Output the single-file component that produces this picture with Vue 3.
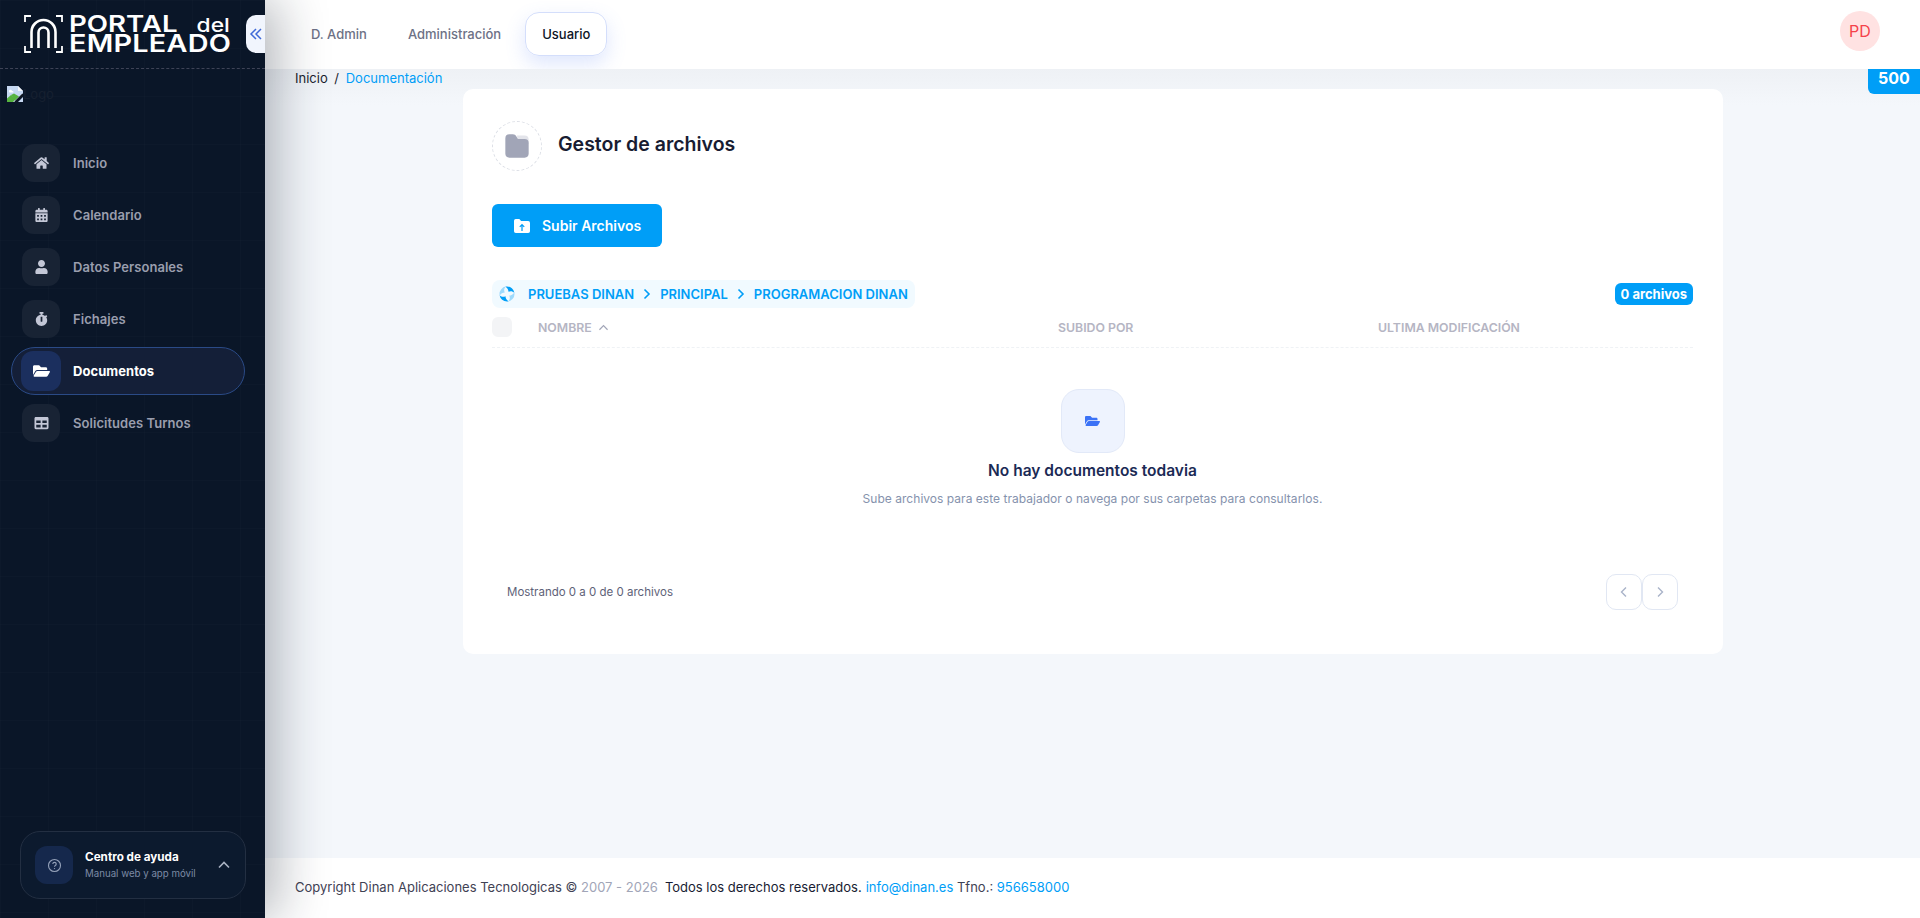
<template>
  <div class="layout">
    <aside class="sidebar">
      <div class="brand">
        <div class="logo">
          <svg class="logo-mark" viewBox="0 0 39 38" width="39" height="38" fill="none" stroke="#fff">
            <path d="M7 1H1v6M32 1h6v6M7 37H1v-6M32 37h6v-6" stroke-width="1.800" />
            <path d="M7.500 33V17a12 12 0 0 1 24 0v16" stroke-width="2.600" />
            <path d="M14.500 33V17.500a5 5 0 0 1 10 0V33" stroke-width="2.600" />
          </svg>
          <div class="logo-text">
            <div class="logo-line portal">PORTAL <span class="logo-del">del</span></div>
            <div class="logo-line empleado">EMPLEADO</div>
          </div>
        </div>
        <button class="collapse" type="button">
          <svg viewBox="0 0 14 14" width="14" height="14" fill="none" stroke="#3f6ad8" stroke-width="1.500">
            <path d="M7 2 2 7l5 5M12 2 7 7l5 5" />
          </svg>
        </button>
      </div>

      <div class="broken-logo">
        <svg viewBox="0 0 16 16" width="16" height="16">
          <path d="M0 0h11l5 5v3l-8 8H0z" fill="#c6d8f2" />
          <path d="M11 0v5h5z" fill="#f2f5fa" />
          <path d="M2 5.500a1.500 1.500 0 0 1 3-.5 1.300 1.300 0 0 1 1.500 1.500h-4z" fill="#fff" />
          <path d="M0 16v-3.500L4 9l5 4-3 3z" fill="#56b33f" />
          <path d="M4 9l3-1.500 5 3-3.500 3.500z" fill="#56b33f" />
          <path d="M8 16l8-8" stroke="#10161f" stroke-width="1.600" />
          <path d="M11 16l5-5v5z" fill="#c6d8f2" />
        </svg>
        <span>Logo</span>
      </div>

      <nav class="menu">
        <a v-for="item in menu" :key="item.label" class="menu-item" :class="{ active: item.active }">
          <span class="menu-icon">
            <svg :viewBox="item.box" :width="item.active ? 17 : 15" :height="item.active ? 16 : 14" fill="currentColor">
              <path :d="item.icon" />
            </svg>
          </span>
          <span class="menu-label">{{ item.label }}</span>
        </a>
      </nav>

      <div class="help">
        <span class="help-icon">
          <svg viewBox="0 0 16 16" width="15" height="15" fill="none" stroke="#93a0b8" stroke-width="1.200">
            <circle cx="8" cy="8" r="6.400" />
            <path d="M6.200 6.400a1.800 1.800 0 1 1 2.700 1.600c-.6.3-.9.7-.9 1.300" />
            <path d="M8 10.800v1" />
          </svg>
        </span>
        <div class="help-text">
          <div class="help-title">Centro de ayuda</div>
          <div class="help-sub">Manual web y app móvil</div>
        </div>
        <svg class="help-arrow" viewBox="0 0 14 14" width="14" height="14" fill="none" stroke="#aab2c2" stroke-width="1.600">
          <path d="M2 9.500 7 4.500l5 5" />
        </svg>
      </div>
    </aside>

    <div class="main">
      <header class="topbar">
        <div class="tabs">
          <a class="tab">D. Admin</a>
          <a class="tab">Administración</a>
          <a class="tab selected">Usuario</a>
        </div>
        <div class="avatar">PD</div>
      </header>

      <main class="content">
        <div class="crumbs">Inicio <span class="crumb-sep">/</span> <span class="crumb-now">Documentación</span></div>
        <div class="error-code">500</div>

        <section class="card">
          <div class="card-head">
            <span class="head-icon">
              <svg viewBox="0 0 24 24" width="28" height="28">
                <path d="M12 3h6.500A3.500 3.500 0 0 1 22 6.500V10H13z" fill="#e3e4ea" />
                <path d="M2 5.500A3.500 3.500 0 0 1 5.500 2h3c1.300 0 2.300.7 3 1.800l1.300 2.200h5.700A3.500 3.500 0 0 1 22 9.500v9a3.500 3.500 0 0 1-3.500 3.500h-13A3.500 3.500 0 0 1 2 18.500z" fill="#a1a5b7" />
              </svg>
            </span>
            <h1>Gestor de archivos</h1>
          </div>

          <button class="upload" type="button">
            <svg viewBox="0 0 20 18" width="18" height="16">
              <path d="M1 3a2 2 0 0 1 2-2h4l2 2.500h8a2 2 0 0 1 2 2V15a2 2 0 0 1-2 2H3a2 2 0 0 1-2-2z" fill="#fff" />
              <path d="M10 14.500V8M7.500 10 10 7.500l2.500 2.500" fill="none" stroke="#009ef7" stroke-width="1.400" />
            </svg>
            Subir Archivos
          </button>

          <div class="path-row">
            <div class="path">
              <svg viewBox="0 0 16 16" width="16" height="16" fill="#009ef7">
                <g v-for="blade in blades" :key="blade.turn" :transform="`rotate(${blade.turn} 8 8)`" :opacity="blade.alpha">
                  <path d="M8 .5a7.500 7.500 0 0 1 7.400 6.300C13.600 5 11.300 4.700 9.500 5.800 9.500 3.800 8.500 1.900 6.400.7 6.900.6 7.500.5 8 .5z" />
                </g>
              </svg>
              <template v-for="(part, i) in path" :key="part">
                <svg v-if="i > 0" class="path-sep" viewBox="0 0 10 12" width="10" height="12" fill="none" stroke="#009ef7" stroke-width="1.600">
                  <path d="M2.500 1.500 7 6l-4.500 4.500" />
                </svg>
                <span class="path-part">{{ part }}</span>
              </template>
            </div>
            <span class="count">0 archivos</span>
          </div>

          <div class="table-head">
            <span class="check"></span>
            <span class="col col-name">
              NOMBRE
              <svg viewBox="0 0 12 10" width="11" height="9" fill="none" stroke="#a1a5b7" stroke-width="1.300">
                <path d="M1.500 7.500 6 3l4.500 4.500" />
              </svg>
            </span>
            <span class="col col-by">SUBIDO POR</span>
            <span class="col">ULTIMA MODIFICACIÓN</span>
          </div>

          <div class="empty">
            <span class="empty-icon">
              <svg viewBox="0 0 576 512" width="15" height="14" fill="#3b72f6">
                <path :d="folderOpen" />
              </svg>
            </span>
            <h2>No hay documentos todavia</h2>
            <p>Sube archivos para este trabajador o navega por sus carpetas para consultarlos.</p>
          </div>

          <div class="pager-row">
            <span class="showing">Mostrando 0 a 0 de 0 archivos</span>
            <div class="pager">
              <button type="button">
                <svg viewBox="0 0 10 12" width="10" height="12" fill="none" stroke="#a9b3c9" stroke-width="1.400">
                  <path d="M7 1.500 2.500 6 7 10.500" />
                </svg>
              </button>
              <button type="button">
                <svg viewBox="0 0 10 12" width="10" height="12" fill="none" stroke="#a9b3c9" stroke-width="1.400">
                  <path d="M3 1.500 7.500 6 3 10.500" />
                </svg>
              </button>
            </div>
          </div>
        </section>
      </main>

      <footer class="footer">
        Copyright Dinan Aplicaciones Tecnologicas ©
        <span class="years">2007 - 2026</span>
        <span class="rights">Todos los derechos reservados.</span>
        <a class="link">info@dinan.es</a> Tfno.: <a class="link">956658000</a>
      </footer>
    </div>
  </div>
</template>

<script setup>
const folderOpen =
  "M572.694 292.093L500.27 416.248A63.997 63.997 0 0 1 444.989 448H45.025c-18.523 0-30.064-20.093-20.731-36.093l72.424-124.155A64 64 0 0 1 152 256h399.964c18.523 0 30.064 20.093 20.73 36.093zM152 224h328v-48c0-26.51-21.49-48-48-48H272l-64-64H48C21.49 64 0 85.49 0 112v278.046l69.077-118.418C86.214 242.25 118.179 224 152 224z";

const menu = [
  {
    label: "Inicio",
    box: "0 0 576 512",
    icon: "M280.37 148.26L96 300.11V464a16 16 0 0 0 16 16l112.06-.29a16 16 0 0 0 15.92-16V368a16 16 0 0 1 16-16h64a16 16 0 0 1 16 16v95.64a16 16 0 0 0 16 16.05L464 480a16 16 0 0 0 16-16V300L295.67 148.26a12.19 12.19 0 0 0-15.3 0zM571.6 251.47L488 182.56V44.05a12 12 0 0 0-12-12h-56a12 12 0 0 0-12 12v72.61L318.47 43a48 48 0 0 0-61 0L4.34 251.47a12 12 0 0 0-1.6 16.9l25.5 31A12 12 0 0 0 45.15 301l235.22-193.74a12.19 12.19 0 0 1 15.3 0L530.9 301a12 12 0 0 0 16.9-1.6l25.5-31a12 12 0 0 0-1.7-16.93z",
  },
  {
    label: "Calendario",
    box: "0 0 448 512",
    icon: "M0 464c0 26.5 21.5 48 48 48h352c26.5 0 48-21.5 48-48V192H0v272zm320-196c0-6.6 5.4-12 12-12h40c6.6 0 12 5.4 12 12v40c0 6.6-5.4 12-12 12h-40c-6.6 0-12-5.4-12-12v-40zm0 128c0-6.6 5.4-12 12-12h40c6.6 0 12 5.4 12 12v40c0 6.6-5.4 12-12 12h-40c-6.6 0-12-5.4-12-12v-40zM192 268c0-6.6 5.4-12 12-12h40c6.6 0 12 5.4 12 12v40c0 6.6-5.4 12-12 12h-40c-6.6 0-12-5.4-12-12v-40zm0 128c0-6.6 5.4-12 12-12h40c6.6 0 12 5.4 12 12v40c0 6.6-5.4 12-12 12h-40c-6.6 0-12-5.4-12-12v-40zM64 268c0-6.6 5.4-12 12-12h40c6.6 0 12 5.4 12 12v40c0 6.6-5.4 12-12 12H76c-6.6 0-12-5.4-12-12v-40zm0 128c0-6.6 5.4-12 12-12h40c6.6 0 12 5.4 12 12v40c0 6.6-5.4 12-12 12H76c-6.6 0-12-5.4-12-12v-40zM400 64h-48V16c0-8.8-7.2-16-16-16h-32c-8.8 0-16 7.2-16 16v48H160V16c0-8.8-7.2-16-16-16h-32c-8.8 0-16 7.2-16 16v48H48C21.5 64 0 85.5 0 112v48h448v-48c0-26.5-21.5-48-48-48z",
  },
  {
    label: "Datos Personales",
    box: "0 0 448 512",
    icon: "M224 256c70.7 0 128-57.3 128-128S294.7 0 224 0 96 57.3 96 128s57.3 128 128 128zm89.6 32h-16.7c-22.2 10.2-46.9 16-72.9 16s-50.6-5.8-72.9-16h-16.7C60.2 288 0 348.2 0 422.4V464c0 26.5 21.5 48 48 48h352c26.5 0 48-21.5 48-48v-41.6c0-74.2-60.2-134.4-134.4-134.4z",
  },
  {
    label: "Fichajes",
    box: "0 0 448 512",
    icon: "M432 304c0 114.9-93.1 208-208 208S16 418.9 16 304c0-104 76.3-190.2 176-205.5V64h-28c-6.6 0-12-5.4-12-12V12c0-6.6 5.4-12 12-12h120c6.6 0 12 5.4 12 12v40c0 6.6-5.4 12-12 12h-28v34.5c37.5 5.8 71.7 21.6 99.7 44.6l27.5-27.5c4.7-4.7 12.3-4.7 17 0l28.3 28.3c4.7 4.7 4.7 12.3 0 17l-29.4 29.4-.6.6C419.7 223.3 432 262.2 432 304zm-176 36V188.5c0-6.6-5.4-12-12-12h-40c-6.6 0-12 5.4-12 12V340c0 6.6 5.4 12 12 12h40c6.6 0 12-5.4 12-12z",
  },
  { label: "Documentos", box: "0 0 576 512", icon: folderOpen, active: true },
  {
    label: "Solicitudes Turnos",
    box: "0 0 512 512",
    icon: "M464 32H48C21.49 32 0 53.49 0 80v352c0 26.51 21.49 48 48 48h416c26.51 0 48-21.49 48-48V80c0-26.51-21.49-48-48-48zM224 416H64v-96h160v96zm0-160H64v-96h160v96zm224 160H288v-96h160v96zm0-160H288v-96h160v96z",
  },
];

const path = ["PRUEBAS DINAN", "PRINCIPAL", "PROGRAMACION DINAN"];

const blades = [
  { turn: 0, alpha: 1 },
  { turn: 90, alpha: 0.35 },
  { turn: 180, alpha: 1 },
  { turn: 270, alpha: 0.35 },
];
</script>

<style>
html,
body {
  margin: 0;
  background: #f4f7fb;
}
</style>

<style scoped>
.layout {
  display: flex;
  height: 100vh;
  overflow: hidden;
  font-family: Inter, "Liberation Sans", sans-serif;
}

.sidebar {
  position: relative;
  z-index: 2;
  flex: 0 0 265px;
  display: flex;
  flex-direction: column;
  box-sizing: border-box;
  background-color: #0a1628;
  background-image: linear-gradient(rgba(255, 255, 255, 0.012) 1px, transparent 1px),
    linear-gradient(90deg, rgba(255, 255, 255, 0.012) 1px, transparent 1px);
  background-size: 48px 48px;
  box-shadow: 12px 0 48px rgba(20, 28, 44, 0.32);
}

.brand {
  display: flex;
  align-items: center;
  justify-content: space-between;
  box-sizing: border-box;
  height: 69px;
  padding-left: 24px;
  border-bottom: 1px dashed #3e4356;
}

.logo {
  display: flex;
  align-items: center;
  gap: 6px;
}

.logo-text {
  width: 161px;
  color: #fff;
  font-weight: 600;
  line-height: 18px;
  white-space: nowrap;
}

/* wider than Inter: the wordmark is a stretched geometric face */
.logo-line {
  display: flex;
  align-items: baseline;
  justify-content: space-between;
  width: 134px;
  transform: scaleX(1.2);
  transform-origin: left;
}

.portal {
  font-size: 23px;
}

.empleado {
  font-size: 24px;
  letter-spacing: 0.2px;
}

.logo-del {
  font-size: 19px;
  font-weight: 500;
}

.collapse {
  display: flex;
  align-items: center;
  justify-content: center;
  width: 19px;
  height: 38px;
  padding: 0;
  border: 0;
  border-radius: 10px 0 0 10px;
  background: #f1f5fd;
}

.broken-logo {
  display: flex;
  height: 16px;
  margin: 17px 0 0 7px;
  color: #162030;
  font-size: 13px;
}

.menu {
  display: flex;
  flex-direction: column;
  gap: 4px;
  margin-top: 37px;
  padding: 0 20px 0 11px;
}

.menu-item {
  display: flex;
  align-items: center;
  height: 48px;
  box-sizing: border-box;
  padding-left: 10px;
  border: 1px solid transparent;
  border-radius: 24px;
  color: #9a9eae;
  font-size: 13px;
  font-weight: 600;
  letter-spacing: 0.05px;
}

.menu-icon {
  display: flex;
  align-items: center;
  justify-content: center;
  width: 38px;
  height: 38px;
  margin-right: 13px;
  border-radius: 12px;
  background: #182334;
  color: #c3c7d6;
}

.menu-item.active {
  padding-left: 9px;
  border-color: #2a4a86;
  background: #141f38;
  color: #fff;
  font-weight: 700;
}

.menu-item.active .menu-icon {
  width: 40px;
  height: 40px;
  margin-right: 12px;
  background: #1b2f5e;
  color: #fff;
}

.help {
  display: flex;
  align-items: center;
  box-sizing: border-box;
  height: 68px;
  margin: auto 19px 19px 20px;
  padding: 0 14px;
  border: 1px solid #232f42;
  border-radius: 20px;
  background: #0c1a2e;
}

.help-icon {
  display: flex;
  align-items: center;
  justify-content: center;
  flex: none;
  width: 38px;
  height: 38px;
  margin-right: 12px;
  border-radius: 12px;
  background: #15284c;
}

.help-text {
  flex: 1;
}

.help-title {
  color: #fff;
  font-size: 11.700px;
  font-weight: 700;
  line-height: 16px;
}

.help-sub {
  margin-top: 2px;
  color: #7c8aa5;
  font-size: 9.700px;
  line-height: 14px;
  white-space: nowrap;
}

.main {
  flex: 1;
  display: flex;
  flex-direction: column;
  min-width: 0;
}

.topbar {
  display: flex;
  align-items: flex-start;
  justify-content: space-between;
  flex: none;
  box-sizing: border-box;
  height: 69px;
  padding: 12px 40px 0 29px;
  background: #fff;
}

.tabs {
  display: flex;
  gap: 7px;
}

.tab {
  padding: 13px 16px;
  border: 1px solid transparent;
  border-radius: 14px;
  color: #6d7186;
  font-size: 13px;
  font-weight: 500;
  line-height: 16px;
}

.tab.selected {
  border-color: #d4defb;
  color: #0d1526;
  box-shadow: 0 8px 20px rgba(91, 128, 246, 0.2);
}

.avatar {
  display: flex;
  align-items: center;
  justify-content: center;
  width: 40px;
  height: 40px;
  margin-top: -1px;
  border-radius: 50%;
  background: #ffe2e2;
  color: #f5424a;
  font-size: 16px;
}

.content {
  position: relative;
  flex: 1;
  padding-left: 30px;
  background: linear-gradient(#eef1f5, #f4f7fb 36px);
  overflow: hidden;
}

.crumbs {
  height: 20px;
  color: #1a1f2e;
  font-size: 13px;
  line-height: 18px;
}

.crumb-sep {
  margin: 0 3px;
}

.crumb-now {
  color: #009ef7;
}

.error-code {
  position: absolute;
  top: 0;
  right: 0;
  width: 52px;
  height: 25px;
  border-radius: 0 0 0 6px;
  background: #009ef7;
  color: #fff;
  font-size: 16px;
  font-weight: 700;
  line-height: 18px;
  text-align: center;
}

.card {
  box-sizing: border-box;
  width: 1260px;
  height: 565px;
  margin-left: 168px;
  padding: 32px 30px 0 29px;
  border-radius: 10px;
  background: #fff;
}

.card-head {
  display: flex;
  align-items: center;
  gap: 16px;
}

.head-icon {
  display: flex;
  align-items: center;
  justify-content: center;
  box-sizing: border-box;
  width: 50px;
  height: 50px;
  border: 1px dashed #dcdfe6;
  border-radius: 50%;
}

h1 {
  margin: 0 0 5px;
  color: #181c32;
  font-size: 19.500px;
  font-weight: 600;
}

.upload {
  display: flex;
  align-items: center;
  gap: 11px;
  width: 170px;
  height: 43px;
  margin-top: 33px;
  padding: 0 0 0 21px;
  border: 0;
  border-radius: 6px;
  background: #009ef7;
  color: #fff;
  font-family: inherit;
  font-size: 14px;
  font-weight: 600;
}

.path-row {
  display: flex;
  align-items: center;
  justify-content: space-between;
  margin-top: 33px;
}

.path {
  display: flex;
  align-items: center;
  height: 28px;
  padding: 0 7px;
  border-radius: 8px;
  background: #f1faff;
  color: #009ef7;
  font-size: 13px;
  font-weight: 600;
}

.path > svg:first-child {
  margin-right: 13px;
}

.path-sep {
  margin: 0 8px;
}

.count {
  padding: 3px 6px;
  border-radius: 6px;
  background: #009ef7;
  color: #fff;
  font-size: 13px;
  font-weight: 700;
  line-height: 16px;
}

.table-head {
  display: grid;
  grid-template-columns: 46px 520px 320px 1fr;
  align-items: center;
  height: 40px;
  margin-top: -1px;
  border-bottom: 1px dashed #eff2f5;
}

.check {
  width: 20px;
  height: 20px;
  border-radius: 6px;
  background: #f3f4f6;
}

.col {
  color: #b5b5c3;
  font-size: 12.300px;
  font-weight: 600;
}

.col-name {
  display: flex;
  align-items: center;
  gap: 6px;
}

.empty {
  display: flex;
  flex-direction: column;
  align-items: center;
  margin-top: 41px;
}

.empty-icon {
  display: flex;
  align-items: center;
  justify-content: center;
  box-sizing: border-box;
  width: 64px;
  height: 64px;
  border: 1px solid #e2e9f8;
  border-radius: 18px;
  background: #eef3fe;
}

h2 {
  margin: 8px 0 0;
  color: #1b2a55;
  font-size: 15.500px;
  font-weight: 600;
  line-height: 20px;
}

.empty p {
  margin: 10px 0 0;
  color: #8592ad;
  font-size: 12px;
  line-height: 16px;
  letter-spacing: 0.03px;
}

.pager-row {
  display: flex;
  align-items: center;
  justify-content: space-between;
  margin-top: 67px;
  padding: 0 15px;
}

.showing {
  color: #5e6278;
  font-size: 11.500px;
}

.pager {
  display: flex;
}

.pager button {
  display: flex;
  align-items: center;
  justify-content: center;
  width: 36px;
  height: 36px;
  padding: 0;
  border: 1px solid #e1e7f3;
  border-radius: 10px;
  background: #fff;
}

.footer {
  flex: none;
  box-sizing: border-box;
  height: 60px;
  padding: 0 30px;
  background: #fff;
  color: #3f4254;
  font-size: 13px;
  line-height: 59px;
}

.years {
  color: #a1a5b7;
}

.rights {
  margin: 0 4px 0 7px;
  color: #181c32;
}

.link {
  color: #009ef7;
}
</style>
